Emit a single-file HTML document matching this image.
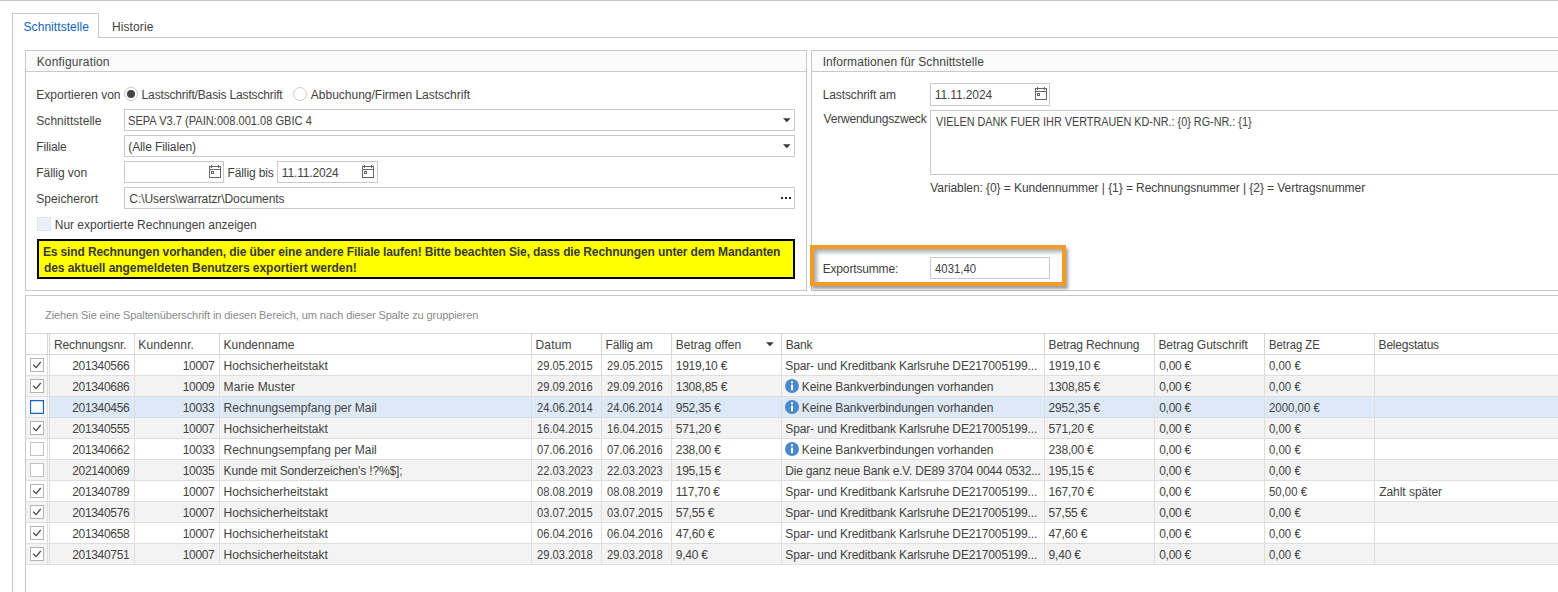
<!DOCTYPE html>
<html><head><meta charset="utf-8"><style>
html,body{margin:0;padding:0;background:#fff;width:1558px;height:592px;overflow:hidden;position:relative}
.t{position:absolute;white-space:nowrap;line-height:14px;font-family:'Liberation Sans', sans-serif}
</style></head><body>
<div style="position:absolute;left:0px;top:0px;width:1558px;height:1px;background:#c4c4c4"></div>
<div style="position:absolute;left:12px;top:13px;width:1px;height:579px;background:#c9c9c9"></div>
<div style="position:absolute;left:12px;top:13px;width:87px;height:1px;background:#c9c9c9"></div>
<div style="position:absolute;left:98px;top:13px;width:1px;height:25px;background:#c9c9c9"></div>
<div style="position:absolute;left:98px;top:37px;width:1460px;height:1px;background:#c9c9c9"></div>
<div style="position:absolute;left:25px;top:50px;width:782px;height:241px;box-sizing:border-box;border:1px solid #c9c9c9;"></div>
<div style="position:absolute;left:26px;top:51px;width:780px;height:20px;background:#fbfbfb"></div>
<div style="position:absolute;left:26px;top:71px;width:780px;height:1px;background:#c9c9c9"></div>
<svg style="position:absolute;left:123px;top:86px" width="16" height="16"><circle cx="8" cy="8" r="6.5" fill="#fff" stroke="#c6c6c6" stroke-width="1"/><circle cx="8" cy="8" r="4" fill="#444"/></svg>
<svg style="position:absolute;left:292px;top:86px" width="16" height="16"><circle cx="8" cy="8" r="6.5" fill="#fff" stroke="#cfcfcf" stroke-width="1"/></svg>
<div style="position:absolute;left:124px;top:109px;width:671px;height:22px;box-sizing:border-box;border:1px solid #c9c9c9;"></div>
<svg style="position:absolute;left:783px;top:118px" width="9" height="5"><path d="M0 0.3 L7.6 0.3 L3.8 4.3 Z" fill="#383838"/></svg>
<div style="position:absolute;left:124px;top:135px;width:671px;height:22px;box-sizing:border-box;border:1px solid #c9c9c9;"></div>
<svg style="position:absolute;left:783px;top:144px" width="9" height="5"><path d="M0 0.3 L7.6 0.3 L3.8 4.3 Z" fill="#383838"/></svg>
<div style="position:absolute;left:124px;top:161px;width:100px;height:22px;box-sizing:border-box;border:1px solid #c9c9c9;"></div>
<svg style="position:absolute;left:209px;top:165px" width="13" height="14" viewBox="0 0 13 14"><rect x="0.5" y="1.5" width="11" height="11" fill="none" stroke="#666" stroke-width="1"/><line x1="0.5" y1="4.5" x2="11.5" y2="4.5" stroke="#666" stroke-width="1"/><line x1="2.5" y1="0" x2="2.5" y2="3" stroke="#666" stroke-width="1"/><line x1="9.5" y1="0" x2="9.5" y2="3" stroke="#666" stroke-width="1"/><rect x="2.5" y="6.5" width="2" height="2" fill="none" stroke="#666" stroke-width="1"/></svg>
<div style="position:absolute;left:277px;top:161px;width:101px;height:22px;box-sizing:border-box;border:1px solid #c9c9c9;"></div>
<svg style="position:absolute;left:362px;top:165px" width="13" height="14" viewBox="0 0 13 14"><rect x="0.5" y="1.5" width="11" height="11" fill="none" stroke="#666" stroke-width="1"/><line x1="0.5" y1="4.5" x2="11.5" y2="4.5" stroke="#666" stroke-width="1"/><line x1="2.5" y1="0" x2="2.5" y2="3" stroke="#666" stroke-width="1"/><line x1="9.5" y1="0" x2="9.5" y2="3" stroke="#666" stroke-width="1"/><rect x="2.5" y="6.5" width="2" height="2" fill="none" stroke="#666" stroke-width="1"/></svg>
<div style="position:absolute;left:124px;top:187px;width:671px;height:22px;box-sizing:border-box;border:1px solid #c9c9c9;"></div>
<div style="position:absolute;left:781px;top:197px;width:2px;height:2px;background:#222"></div>
<div style="position:absolute;left:785px;top:197px;width:2px;height:2px;background:#222"></div>
<div style="position:absolute;left:789px;top:197px;width:2px;height:2px;background:#222"></div>
<div style="position:absolute;left:37px;top:217px;width:14px;height:14px;box-sizing:border-box;border:1px solid #dbe5f1;background:#eaf1fa"></div>
<div style="position:absolute;left:37px;top:239px;width:758px;height:40px;box-sizing:border-box;border:2px solid #000;background:#ffff00"></div>
<div style="position:absolute;left:811px;top:50px;width:753px;height:241px;box-sizing:border-box;border:1px solid #c9c9c9;"></div>
<div style="position:absolute;left:812px;top:51px;width:746px;height:20px;background:#fbfbfb"></div>
<div style="position:absolute;left:812px;top:71px;width:746px;height:1px;background:#c9c9c9"></div>
<div style="position:absolute;left:930px;top:83px;width:120px;height:23px;box-sizing:border-box;border:1px solid #c9c9c9;"></div>
<svg style="position:absolute;left:1035px;top:87px" width="13" height="14" viewBox="0 0 13 14"><rect x="0.5" y="1.5" width="11" height="11" fill="none" stroke="#666" stroke-width="1"/><line x1="0.5" y1="4.5" x2="11.5" y2="4.5" stroke="#666" stroke-width="1"/><line x1="2.5" y1="0" x2="2.5" y2="3" stroke="#666" stroke-width="1"/><line x1="9.5" y1="0" x2="9.5" y2="3" stroke="#666" stroke-width="1"/><rect x="2.5" y="6.5" width="2" height="2" fill="none" stroke="#666" stroke-width="1"/></svg>
<div style="position:absolute;left:930px;top:110px;width:634px;height:65px;box-sizing:border-box;border:1px solid #c9c9c9;"></div>
<div style="position:absolute;left:810px;top:245px;width:256px;height:41px;box-sizing:border-box;border:4px solid #f19c26;background:#fff;box-shadow:2px 3px 3px rgba(0,0,0,0.38), inset 3px 3px 4px rgba(40,50,60,0.42)"></div>
<div style="position:absolute;left:930px;top:257px;width:120px;height:22px;box-sizing:border-box;border:1px solid #c9c9c9;"></div>
<div style="position:absolute;left:25px;top:295px;width:1539px;height:303px;box-sizing:border-box;border:1px solid #c9c9c9;"></div>
<div style="position:absolute;left:26px;top:333px;width:1532px;height:1px;background:#d6d6d6"></div>
<div style="position:absolute;left:26px;top:354px;width:1532px;height:1px;background:#d6d6d6"></div>
<div style="position:absolute;left:26px;top:355px;width:1532px;height:20px;background:#ffffff"></div>
<div style="position:absolute;left:26px;top:375px;width:1532px;height:1px;background:#dedede"></div>
<div style="position:absolute;left:26px;top:376px;width:1532px;height:20px;background:#f3f3f3"></div>
<div style="position:absolute;left:26px;top:396px;width:1532px;height:1px;background:#dedede"></div>
<div style="position:absolute;left:26px;top:397px;width:1532px;height:20px;background:#dde9f6"></div>
<div style="position:absolute;left:26px;top:417px;width:1532px;height:1px;background:#dedede"></div>
<div style="position:absolute;left:26px;top:418px;width:1532px;height:20px;background:#f3f3f3"></div>
<div style="position:absolute;left:26px;top:438px;width:1532px;height:1px;background:#dedede"></div>
<div style="position:absolute;left:26px;top:439px;width:1532px;height:20px;background:#ffffff"></div>
<div style="position:absolute;left:26px;top:459px;width:1532px;height:1px;background:#dedede"></div>
<div style="position:absolute;left:26px;top:460px;width:1532px;height:20px;background:#f3f3f3"></div>
<div style="position:absolute;left:26px;top:480px;width:1532px;height:1px;background:#dedede"></div>
<div style="position:absolute;left:26px;top:481px;width:1532px;height:20px;background:#ffffff"></div>
<div style="position:absolute;left:26px;top:501px;width:1532px;height:1px;background:#dedede"></div>
<div style="position:absolute;left:26px;top:502px;width:1532px;height:20px;background:#f3f3f3"></div>
<div style="position:absolute;left:26px;top:522px;width:1532px;height:1px;background:#dedede"></div>
<div style="position:absolute;left:26px;top:523px;width:1532px;height:20px;background:#ffffff"></div>
<div style="position:absolute;left:26px;top:543px;width:1532px;height:1px;background:#dedede"></div>
<div style="position:absolute;left:26px;top:544px;width:1532px;height:20px;background:#f3f3f3"></div>
<div style="position:absolute;left:26px;top:564px;width:1532px;height:1px;background:#dedede"></div>
<div style="position:absolute;left:47px;top:334px;width:1px;height:20px;background:#d6d6d6"></div>
<div style="position:absolute;left:47px;top:355px;width:1px;height:209px;background:#dedede"></div>
<div style="position:absolute;left:49px;top:334px;width:1px;height:20px;background:#d6d6d6"></div>
<div style="position:absolute;left:49px;top:355px;width:1px;height:209px;background:#dedede"></div>
<div style="position:absolute;left:134px;top:334px;width:1px;height:20px;background:#d6d6d6"></div>
<div style="position:absolute;left:134px;top:355px;width:1px;height:209px;background:#dedede"></div>
<div style="position:absolute;left:219px;top:334px;width:1px;height:20px;background:#d6d6d6"></div>
<div style="position:absolute;left:219px;top:355px;width:1px;height:209px;background:#dedede"></div>
<div style="position:absolute;left:531px;top:334px;width:1px;height:20px;background:#d6d6d6"></div>
<div style="position:absolute;left:531px;top:355px;width:1px;height:209px;background:#dedede"></div>
<div style="position:absolute;left:601px;top:334px;width:1px;height:20px;background:#d6d6d6"></div>
<div style="position:absolute;left:601px;top:355px;width:1px;height:209px;background:#dedede"></div>
<div style="position:absolute;left:671px;top:334px;width:1px;height:20px;background:#d6d6d6"></div>
<div style="position:absolute;left:671px;top:355px;width:1px;height:209px;background:#dedede"></div>
<div style="position:absolute;left:781px;top:334px;width:1px;height:20px;background:#d6d6d6"></div>
<div style="position:absolute;left:781px;top:355px;width:1px;height:209px;background:#dedede"></div>
<div style="position:absolute;left:1044px;top:334px;width:1px;height:20px;background:#d6d6d6"></div>
<div style="position:absolute;left:1044px;top:355px;width:1px;height:209px;background:#dedede"></div>
<div style="position:absolute;left:1154px;top:334px;width:1px;height:20px;background:#d6d6d6"></div>
<div style="position:absolute;left:1154px;top:355px;width:1px;height:209px;background:#dedede"></div>
<div style="position:absolute;left:1264px;top:334px;width:1px;height:20px;background:#d6d6d6"></div>
<div style="position:absolute;left:1264px;top:355px;width:1px;height:209px;background:#dedede"></div>
<div style="position:absolute;left:1374px;top:334px;width:1px;height:20px;background:#d6d6d6"></div>
<div style="position:absolute;left:1374px;top:355px;width:1px;height:209px;background:#dedede"></div>
<svg style="position:absolute;left:766px;top:342px" width="9" height="5"><path d="M0 0.2 L7.8 0.2 L3.9 4.2 Z" fill="#383838"/></svg>
<div style="position:absolute;left:30px;top:358px;width:14px;height:14px;box-sizing:border-box;border:1px solid #b4b4b4;background:#fff"></div>
<svg style="position:absolute;left:30px;top:358px" width="14" height="14"><path d="M3.2 6.7 L6.1 9.6 L10.7 4" fill="none" stroke="#454545" stroke-width="1.25"/></svg>
<div style="position:absolute;left:30px;top:379px;width:14px;height:14px;box-sizing:border-box;border:1px solid #b4b4b4;background:#fff"></div>
<svg style="position:absolute;left:30px;top:379px" width="14" height="14"><path d="M3.2 6.7 L6.1 9.6 L10.7 4" fill="none" stroke="#454545" stroke-width="1.25"/></svg>
<svg style="position:absolute;left:785px;top:379px" width="14" height="14" viewBox="0 0 14 14"><circle cx="7" cy="7" r="7" fill="#4a88cc"/><rect x="6" y="2.3" width="2" height="2" fill="#fff"/><rect x="6" y="5.6" width="2" height="5.6" fill="#fff"/></svg>
<div style="position:absolute;left:26px;top:397px;width:21px;height:20px;background:#f4f8fd"></div>
<div style="position:absolute;left:48px;top:397px;width:1px;height:20px;background:#f4f8fd"></div>
<div style="position:absolute;left:30px;top:400px;width:14px;height:14px;box-sizing:border-box;border:1px solid #1465c2;box-shadow:inset 0 0 0 0.15px #1465c2;background:#fff"></div>
<svg style="position:absolute;left:785px;top:400px" width="14" height="14" viewBox="0 0 14 14"><circle cx="7" cy="7" r="7" fill="#4a88cc"/><rect x="6" y="2.3" width="2" height="2" fill="#fff"/><rect x="6" y="5.6" width="2" height="5.6" fill="#fff"/></svg>
<div style="position:absolute;left:30px;top:421px;width:14px;height:14px;box-sizing:border-box;border:1px solid #b4b4b4;background:#fff"></div>
<svg style="position:absolute;left:30px;top:421px" width="14" height="14"><path d="M3.2 6.7 L6.1 9.6 L10.7 4" fill="none" stroke="#454545" stroke-width="1.25"/></svg>
<div style="position:absolute;left:30px;top:442px;width:14px;height:14px;box-sizing:border-box;border:1px solid #c2c2c2;background:#fff"></div>
<svg style="position:absolute;left:785px;top:442px" width="14" height="14" viewBox="0 0 14 14"><circle cx="7" cy="7" r="7" fill="#4a88cc"/><rect x="6" y="2.3" width="2" height="2" fill="#fff"/><rect x="6" y="5.6" width="2" height="5.6" fill="#fff"/></svg>
<div style="position:absolute;left:30px;top:463px;width:14px;height:14px;box-sizing:border-box;border:1px solid #c2c2c2;background:#fff"></div>
<div style="position:absolute;left:30px;top:484px;width:14px;height:14px;box-sizing:border-box;border:1px solid #b4b4b4;background:#fff"></div>
<svg style="position:absolute;left:30px;top:484px" width="14" height="14"><path d="M3.2 6.7 L6.1 9.6 L10.7 4" fill="none" stroke="#454545" stroke-width="1.25"/></svg>
<div style="position:absolute;left:30px;top:505px;width:14px;height:14px;box-sizing:border-box;border:1px solid #b4b4b4;background:#fff"></div>
<svg style="position:absolute;left:30px;top:505px" width="14" height="14"><path d="M3.2 6.7 L6.1 9.6 L10.7 4" fill="none" stroke="#454545" stroke-width="1.25"/></svg>
<div style="position:absolute;left:30px;top:526px;width:14px;height:14px;box-sizing:border-box;border:1px solid #b4b4b4;background:#fff"></div>
<svg style="position:absolute;left:30px;top:526px" width="14" height="14"><path d="M3.2 6.7 L6.1 9.6 L10.7 4" fill="none" stroke="#454545" stroke-width="1.25"/></svg>
<div style="position:absolute;left:30px;top:547px;width:14px;height:14px;box-sizing:border-box;border:1px solid #b4b4b4;background:#fff"></div>
<svg style="position:absolute;left:30px;top:547px" width="14" height="14"><path d="M3.2 6.7 L6.1 9.6 L10.7 4" fill="none" stroke="#454545" stroke-width="1.25"/></svg>
<div class="t" style="left:23.50px;top:20px;font-size:12px;color:#1264be;letter-spacing:0.067px">Schnittstelle</div>
<div class="t" style="left:111.90px;top:20px;font-size:12px;color:#424242;letter-spacing:0.114px">Historie</div>
<div class="t" style="left:36.70px;top:55px;font-size:12px;color:#424242;letter-spacing:0.175px">Konfiguration</div>
<div class="t" style="left:36.30px;top:88px;font-size:12px;color:#424242;letter-spacing:0.014px">Exportieren von</div>
<div class="t" style="left:141.60px;top:88px;font-size:12px;color:#424242;letter-spacing:-0.154px">Lastschrift/Basis Lastschrift</div>
<div class="t" style="left:310.80px;top:88px;font-size:12px;color:#424242;letter-spacing:-0.004px">Abbuchung/Firmen Lastschrift</div>
<div class="t" style="left:36.30px;top:114px;font-size:12px;color:#424242;letter-spacing:0.042px">Schnittstelle</div>
<div class="t" style="left:128.28px;top:114px;font-size:12px;color:#424242;transform:scaleX(0.9237);transform-origin:0 0">SEPA V3.7 (PAIN:008.001.08 GBIC 4</div>
<div class="t" style="left:36.30px;top:140px;font-size:12px;color:#424242;letter-spacing:-0.167px">Filiale</div>
<div class="t" style="left:128.30px;top:140px;font-size:12px;color:#424242;letter-spacing:-0.114px">(Alle Filialen)</div>
<div class="t" style="left:36.30px;top:166px;font-size:12px;color:#424242;letter-spacing:-0.067px">Fällig von</div>
<div class="t" style="left:227.50px;top:166px;font-size:12px;color:#424242;letter-spacing:-0.111px">Fällig bis</div>
<div class="t" style="left:281.80px;top:166px;font-size:12px;color:#424242;letter-spacing:-0.144px">11.11.2024</div>
<div class="t" style="left:36.30px;top:192px;font-size:12px;color:#424242;letter-spacing:0.040px">Speicherort</div>
<div class="t" style="left:129.30px;top:192px;font-size:12px;color:#424242;letter-spacing:-0.081px">C:\Users\warratzr\Documents</div>
<div class="t" style="left:54.80px;top:218px;font-size:12px;color:#424242;letter-spacing:-0.024px">Nur exportierte Rechnungen anzeigen</div>
<div class="t" style="left:42.90px;top:245px;font-size:12px;color:#3a3a3a;letter-spacing:-0.122px;font-weight:bold">Es sind Rechnungen vorhanden, die über eine andere Filiale laufen! Bitte beachten Sie, dass die Rechnungen unter dem Mandanten</div>
<div class="t" style="left:43.90px;top:261px;font-size:12px;color:#3a3a3a;letter-spacing:-0.050px;font-weight:bold">des aktuell angemeldeten Benutzers exportiert werden!</div>
<div class="t" style="left:822.70px;top:55px;font-size:12px;color:#424242;letter-spacing:0.083px">Informationen für Schnittstelle</div>
<div class="t" style="left:822.70px;top:88px;font-size:12px;color:#424242;letter-spacing:-0.115px">Lastschrift am</div>
<div class="t" style="left:934.70px;top:88px;font-size:12px;color:#424242;letter-spacing:-0.089px">11.11.2024</div>
<div class="t" style="left:823.50px;top:112px;font-size:12px;color:#424242;letter-spacing:-0.193px">Verwendungszweck</div>
<div class="t" style="left:935.80px;top:115px;font-size:12px;color:#424242;transform:scaleX(0.9020);transform-origin:0 0">VIELEN DANK FUER IHR VERTRAUEN KD-NR.: {0} RG-NR.: {1}</div>
<div class="t" style="left:930.30px;top:181px;font-size:12px;color:#424242;letter-spacing:-0.068px">Variablen: {0} = Kundennummer | {1} = Rechnungsnummer | {2} = Vertragsnummer</div>
<div class="t" style="left:822.70px;top:262px;font-size:12px;color:#424242;letter-spacing:-0.164px">Exportsumme:</div>
<div class="t" style="left:935.10px;top:262px;font-size:12px;color:#424242;transform:scaleX(0.9465);transform-origin:0 0">4031,40</div>
<div class="t" style="left:45.00px;top:308px;font-size:11px;color:#8a8a8a;letter-spacing:-0.093px">Ziehen Sie eine Spaltenüberschrift in diesen Bereich, um nach dieser Spalte zu gruppieren</div>
<div class="t" style="left:54.00px;top:338px;font-size:12px;color:#424242;letter-spacing:-0.145px">Rechnungsnr.</div>
<div class="t" style="left:138.30px;top:338px;font-size:12px;color:#424242;letter-spacing:0.112px">Kundennr.</div>
<div class="t" style="left:223.60px;top:338px;font-size:12px;color:#424242;letter-spacing:-0.067px">Kundenname</div>
<div class="t" style="left:535.50px;top:338px;font-size:12px;color:#424242;letter-spacing:0.175px">Datum</div>
<div class="t" style="left:605.60px;top:338px;font-size:12px;color:#424242;letter-spacing:-0.188px">Fällig am</div>
<div class="t" style="left:675.70px;top:338px;font-size:12px;color:#424242;letter-spacing:0.036px">Betrag offen</div>
<div class="t" style="left:785.70px;top:338px;font-size:12px;color:#424242;letter-spacing:-0.200px">Bank</div>
<div class="t" style="left:1048.60px;top:338px;font-size:12px;color:#424242;letter-spacing:-0.186px">Betrag Rechnung</div>
<div class="t" style="left:1158.40px;top:338px;font-size:12px;color:#424242;letter-spacing:-0.031px">Betrag Gutschrift</div>
<div class="t" style="left:1268.66px;top:338px;font-size:12px;color:#424242;transform:scaleX(0.9377);transform-origin:0 0">Betrag ZE</div>
<div class="t" style="left:1378.60px;top:338px;font-size:12px;color:#424242;letter-spacing:-0.220px">Belegstatus</div>
<div class="t" style="left:72.20px;top:359px;font-size:12px;color:#424242;letter-spacing:-0.325px">201340566</div>
<div class="t" style="left:182.80px;top:359px;font-size:12px;color:#424242;letter-spacing:-0.350px">10007</div>
<div class="t" style="left:223.60px;top:359px;font-size:12px;color:#424242;letter-spacing:-0.028px">Hochsicherheitstakt</div>
<div class="t" style="left:536.50px;top:359px;font-size:12px;color:#424242;transform:scaleX(0.9283);transform-origin:0 0">29.05.2015</div>
<div class="t" style="left:606.60px;top:359px;font-size:12px;color:#424242;transform:scaleX(0.9283);transform-origin:0 0">29.05.2015</div>
<div class="t" style="left:675.70px;top:359px;font-size:12px;color:#424242;letter-spacing:-0.213px">1919,10 €</div>
<div class="t" style="left:785.30px;top:359px;font-size:12px;color:#424242;letter-spacing:-0.141px">Spar- und Kreditbank Karlsruhe DE217005199...</div>
<div class="t" style="left:1048.60px;top:359px;font-size:12px;color:#424242;letter-spacing:-0.213px">1919,10 €</div>
<div class="t" style="left:1159.20px;top:359px;font-size:12px;color:#424242;letter-spacing:-0.280px">0,00 €</div>
<div class="t" style="left:1269.40px;top:359px;font-size:12px;color:#424242;transform:scaleX(0.9509);transform-origin:0 0">0,00 €</div>
<div class="t" style="left:72.20px;top:380px;font-size:12px;color:#424242;letter-spacing:-0.325px">201340686</div>
<div class="t" style="left:182.80px;top:380px;font-size:12px;color:#424242;letter-spacing:-0.350px">10009</div>
<div class="t" style="left:223.60px;top:380px;font-size:12px;color:#424242;letter-spacing:0.127px">Marie Muster</div>
<div class="t" style="left:536.50px;top:380px;font-size:12px;color:#424242;transform:scaleX(0.9283);transform-origin:0 0">29.09.2016</div>
<div class="t" style="left:606.60px;top:380px;font-size:12px;color:#424242;transform:scaleX(0.9283);transform-origin:0 0">29.09.2016</div>
<div class="t" style="left:675.70px;top:380px;font-size:12px;color:#424242;letter-spacing:-0.213px">1308,85 €</div>
<div class="t" style="left:801.80px;top:380px;font-size:12px;color:#424242;letter-spacing:-0.081px">Keine Bankverbindungen vorhanden</div>
<div class="t" style="left:1048.60px;top:380px;font-size:12px;color:#424242;letter-spacing:-0.213px">1308,85 €</div>
<div class="t" style="left:1159.20px;top:380px;font-size:12px;color:#424242;letter-spacing:-0.280px">0,00 €</div>
<div class="t" style="left:1269.40px;top:380px;font-size:12px;color:#424242;transform:scaleX(0.9509);transform-origin:0 0">0,00 €</div>
<div class="t" style="left:72.20px;top:401px;font-size:12px;color:#424242;letter-spacing:-0.325px">201340456</div>
<div class="t" style="left:182.80px;top:401px;font-size:12px;color:#424242;letter-spacing:-0.350px">10033</div>
<div class="t" style="left:223.60px;top:401px;font-size:12px;color:#424242;letter-spacing:-0.012px">Rechnungsempfang per Mail</div>
<div class="t" style="left:536.50px;top:401px;font-size:12px;color:#424242;transform:scaleX(0.9283);transform-origin:0 0">24.06.2014</div>
<div class="t" style="left:606.60px;top:401px;font-size:12px;color:#424242;transform:scaleX(0.9283);transform-origin:0 0">24.06.2014</div>
<div class="t" style="left:675.70px;top:401px;font-size:12px;color:#424242;letter-spacing:-0.220px">952,35 €</div>
<div class="t" style="left:801.80px;top:401px;font-size:12px;color:#424242;letter-spacing:-0.081px">Keine Bankverbindungen vorhanden</div>
<div class="t" style="left:1048.60px;top:401px;font-size:12px;color:#424242;letter-spacing:-0.217px">2952,35 €</div>
<div class="t" style="left:1159.20px;top:401px;font-size:12px;color:#424242;letter-spacing:-0.280px">0,00 €</div>
<div class="t" style="left:1269.40px;top:401px;font-size:12px;color:#424242;transform:scaleX(0.9509);transform-origin:0 0">2000,00 €</div>
<div class="t" style="left:72.20px;top:422px;font-size:12px;color:#424242;letter-spacing:-0.325px">201340555</div>
<div class="t" style="left:182.80px;top:422px;font-size:12px;color:#424242;letter-spacing:-0.350px">10007</div>
<div class="t" style="left:223.60px;top:422px;font-size:12px;color:#424242;letter-spacing:-0.028px">Hochsicherheitstakt</div>
<div class="t" style="left:536.50px;top:422px;font-size:12px;color:#424242;transform:scaleX(0.9283);transform-origin:0 0">16.04.2015</div>
<div class="t" style="left:606.60px;top:422px;font-size:12px;color:#424242;transform:scaleX(0.9283);transform-origin:0 0">16.04.2015</div>
<div class="t" style="left:675.70px;top:422px;font-size:12px;color:#424242;letter-spacing:-0.215px">571,20 €</div>
<div class="t" style="left:785.30px;top:422px;font-size:12px;color:#424242;letter-spacing:-0.141px">Spar- und Kreditbank Karlsruhe DE217005199...</div>
<div class="t" style="left:1048.60px;top:422px;font-size:12px;color:#424242;letter-spacing:-0.215px">571,20 €</div>
<div class="t" style="left:1159.20px;top:422px;font-size:12px;color:#424242;letter-spacing:-0.280px">0,00 €</div>
<div class="t" style="left:1269.40px;top:422px;font-size:12px;color:#424242;transform:scaleX(0.9509);transform-origin:0 0">0,00 €</div>
<div class="t" style="left:72.20px;top:443px;font-size:12px;color:#424242;letter-spacing:-0.325px">201340662</div>
<div class="t" style="left:182.80px;top:443px;font-size:12px;color:#424242;letter-spacing:-0.350px">10033</div>
<div class="t" style="left:223.60px;top:443px;font-size:12px;color:#424242;letter-spacing:-0.012px">Rechnungsempfang per Mail</div>
<div class="t" style="left:536.50px;top:443px;font-size:12px;color:#424242;transform:scaleX(0.9283);transform-origin:0 0">07.06.2016</div>
<div class="t" style="left:606.60px;top:443px;font-size:12px;color:#424242;transform:scaleX(0.9283);transform-origin:0 0">07.06.2016</div>
<div class="t" style="left:675.70px;top:443px;font-size:12px;color:#424242;letter-spacing:-0.220px">238,00 €</div>
<div class="t" style="left:801.80px;top:443px;font-size:12px;color:#424242;letter-spacing:-0.081px">Keine Bankverbindungen vorhanden</div>
<div class="t" style="left:1048.60px;top:443px;font-size:12px;color:#424242;letter-spacing:-0.220px">238,00 €</div>
<div class="t" style="left:1159.20px;top:443px;font-size:12px;color:#424242;letter-spacing:-0.280px">0,00 €</div>
<div class="t" style="left:1269.40px;top:443px;font-size:12px;color:#424242;transform:scaleX(0.9509);transform-origin:0 0">0,00 €</div>
<div class="t" style="left:72.20px;top:464px;font-size:12px;color:#424242;letter-spacing:-0.325px">202140069</div>
<div class="t" style="left:182.80px;top:464px;font-size:12px;color:#424242;letter-spacing:-0.350px">10035</div>
<div class="t" style="left:223.60px;top:464px;font-size:12px;color:#424242;letter-spacing:-0.129px">Kunde mit Sonderzeichen&#x27;s !?%$];</div>
<div class="t" style="left:536.50px;top:464px;font-size:12px;color:#424242;transform:scaleX(0.9283);transform-origin:0 0">22.03.2023</div>
<div class="t" style="left:606.60px;top:464px;font-size:12px;color:#424242;transform:scaleX(0.9283);transform-origin:0 0">22.03.2023</div>
<div class="t" style="left:675.70px;top:464px;font-size:12px;color:#424242;letter-spacing:-0.215px">195,15 €</div>
<div class="t" style="left:785.30px;top:464px;font-size:12px;color:#424242;letter-spacing:-0.213px">Die ganz neue Bank e.V. DE89 3704 0044 0532...</div>
<div class="t" style="left:1048.60px;top:464px;font-size:12px;color:#424242;letter-spacing:-0.215px">195,15 €</div>
<div class="t" style="left:1159.20px;top:464px;font-size:12px;color:#424242;letter-spacing:-0.280px">0,00 €</div>
<div class="t" style="left:1269.40px;top:464px;font-size:12px;color:#424242;transform:scaleX(0.9509);transform-origin:0 0">0,00 €</div>
<div class="t" style="left:72.20px;top:485px;font-size:12px;color:#424242;letter-spacing:-0.325px">201340789</div>
<div class="t" style="left:182.80px;top:485px;font-size:12px;color:#424242;letter-spacing:-0.350px">10007</div>
<div class="t" style="left:223.60px;top:485px;font-size:12px;color:#424242;letter-spacing:-0.028px">Hochsicherheitstakt</div>
<div class="t" style="left:536.50px;top:485px;font-size:12px;color:#424242;transform:scaleX(0.9283);transform-origin:0 0">08.08.2019</div>
<div class="t" style="left:606.60px;top:485px;font-size:12px;color:#424242;transform:scaleX(0.9283);transform-origin:0 0">08.08.2019</div>
<div class="t" style="left:675.70px;top:485px;font-size:12px;color:#424242;letter-spacing:-0.210px">117,70 €</div>
<div class="t" style="left:785.30px;top:485px;font-size:12px;color:#424242;letter-spacing:-0.141px">Spar- und Kreditbank Karlsruhe DE217005199...</div>
<div class="t" style="left:1048.60px;top:485px;font-size:12px;color:#424242;letter-spacing:-0.215px">167,70 €</div>
<div class="t" style="left:1159.20px;top:485px;font-size:12px;color:#424242;letter-spacing:-0.280px">0,00 €</div>
<div class="t" style="left:1269.40px;top:485px;font-size:12px;color:#424242;transform:scaleX(0.9509);transform-origin:0 0">50,00 €</div>
<div class="t" style="left:1379.20px;top:485px;font-size:12px;color:#424242;letter-spacing:-0.045px">Zahlt später</div>
<div class="t" style="left:72.20px;top:506px;font-size:12px;color:#424242;letter-spacing:-0.325px">201340576</div>
<div class="t" style="left:182.80px;top:506px;font-size:12px;color:#424242;letter-spacing:-0.350px">10007</div>
<div class="t" style="left:223.60px;top:506px;font-size:12px;color:#424242;letter-spacing:-0.028px">Hochsicherheitstakt</div>
<div class="t" style="left:536.50px;top:506px;font-size:12px;color:#424242;transform:scaleX(0.9283);transform-origin:0 0">03.07.2015</div>
<div class="t" style="left:606.60px;top:506px;font-size:12px;color:#424242;transform:scaleX(0.9283);transform-origin:0 0">03.07.2015</div>
<div class="t" style="left:675.70px;top:506px;font-size:12px;color:#424242;letter-spacing:-0.213px">57,55 €</div>
<div class="t" style="left:785.30px;top:506px;font-size:12px;color:#424242;letter-spacing:-0.141px">Spar- und Kreditbank Karlsruhe DE217005199...</div>
<div class="t" style="left:1048.60px;top:506px;font-size:12px;color:#424242;letter-spacing:-0.213px">57,55 €</div>
<div class="t" style="left:1159.20px;top:506px;font-size:12px;color:#424242;letter-spacing:-0.280px">0,00 €</div>
<div class="t" style="left:1269.40px;top:506px;font-size:12px;color:#424242;transform:scaleX(0.9509);transform-origin:0 0">0,00 €</div>
<div class="t" style="left:72.20px;top:527px;font-size:12px;color:#424242;letter-spacing:-0.325px">201340658</div>
<div class="t" style="left:182.80px;top:527px;font-size:12px;color:#424242;letter-spacing:-0.350px">10007</div>
<div class="t" style="left:223.60px;top:527px;font-size:12px;color:#424242;letter-spacing:-0.028px">Hochsicherheitstakt</div>
<div class="t" style="left:536.50px;top:527px;font-size:12px;color:#424242;transform:scaleX(0.9283);transform-origin:0 0">06.04.2016</div>
<div class="t" style="left:606.60px;top:527px;font-size:12px;color:#424242;transform:scaleX(0.9283);transform-origin:0 0">06.04.2016</div>
<div class="t" style="left:675.70px;top:527px;font-size:12px;color:#424242;letter-spacing:-0.218px">47,60 €</div>
<div class="t" style="left:785.30px;top:527px;font-size:12px;color:#424242;letter-spacing:-0.141px">Spar- und Kreditbank Karlsruhe DE217005199...</div>
<div class="t" style="left:1048.60px;top:527px;font-size:12px;color:#424242;letter-spacing:-0.218px">47,60 €</div>
<div class="t" style="left:1159.20px;top:527px;font-size:12px;color:#424242;letter-spacing:-0.280px">0,00 €</div>
<div class="t" style="left:1269.40px;top:527px;font-size:12px;color:#424242;transform:scaleX(0.9509);transform-origin:0 0">0,00 €</div>
<div class="t" style="left:72.20px;top:548px;font-size:12px;color:#424242;letter-spacing:-0.325px">201340751</div>
<div class="t" style="left:182.80px;top:548px;font-size:12px;color:#424242;letter-spacing:-0.350px">10007</div>
<div class="t" style="left:223.60px;top:548px;font-size:12px;color:#424242;letter-spacing:-0.028px">Hochsicherheitstakt</div>
<div class="t" style="left:536.50px;top:548px;font-size:12px;color:#424242;transform:scaleX(0.9283);transform-origin:0 0">29.03.2018</div>
<div class="t" style="left:606.60px;top:548px;font-size:12px;color:#424242;transform:scaleX(0.9283);transform-origin:0 0">29.03.2018</div>
<div class="t" style="left:675.70px;top:548px;font-size:12px;color:#424242;letter-spacing:-0.216px">9,40 €</div>
<div class="t" style="left:785.30px;top:548px;font-size:12px;color:#424242;letter-spacing:-0.141px">Spar- und Kreditbank Karlsruhe DE217005199...</div>
<div class="t" style="left:1048.60px;top:548px;font-size:12px;color:#424242;letter-spacing:-0.216px">9,40 €</div>
<div class="t" style="left:1159.20px;top:548px;font-size:12px;color:#424242;letter-spacing:-0.280px">0,00 €</div>
<div class="t" style="left:1269.40px;top:548px;font-size:12px;color:#424242;transform:scaleX(0.9509);transform-origin:0 0">0,00 €</div>
</body></html>
